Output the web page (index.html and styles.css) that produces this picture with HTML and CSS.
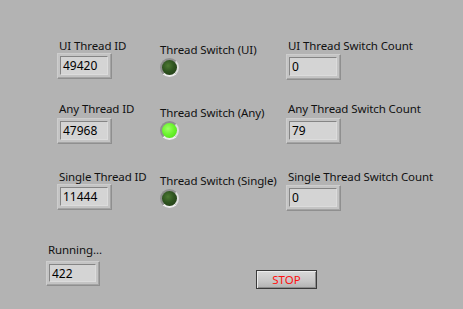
FILE: index.html
```html
<!DOCTYPE html>
<html lang="en">
<head>
    <meta charset="UTF-8">
    <meta name="viewport" content="width=device-width, initial-scale=1.0">
    <title>Thread Switch Panel</title>
    <link rel="stylesheet" href="styles.css">
</head>
<body>
    <div class="panel">
        <div class="grid">
            <div class="cell">
                <div class="label">UI Thread ID</div>
                <div class="indicator"><div class="value">49420</div></div>
            </div>
            <div class="cell led-cell">
                <div class="label">Thread Switch (UI)</div>
                <div class="led"></div>
            </div>
            <div class="cell">
                <div class="label">UI Thread Switch Count</div>
                <div class="indicator count"><div class="value">0</div></div>
            </div>

            <div class="cell">
                <div class="label">Any Thread ID</div>
                <div class="indicator low"><div class="value">47968</div></div>
            </div>
            <div class="cell led-cell">
                <div class="label">Thread Switch (Any)</div>
                <div class="led on"></div>
            </div>
            <div class="cell">
                <div class="label">Any Thread Switch Count</div>
                <div class="indicator count low"><div class="value">79</div></div>
            </div>

            <div class="cell">
                <div class="label">Single Thread ID</div>
                <div class="indicator"><div class="value">11444</div></div>
            </div>
            <div class="cell led-cell">
                <div class="label">Thread Switch (Single)</div>
                <div class="led"></div>
            </div>
            <div class="cell">
                <div class="label">Single Thread Switch Count</div>
                <div class="indicator count"><div class="value">0</div></div>
            </div>
        </div>

        <div class="bottom">
            <div class="running">
                <div class="label">Running...</div>
                <div class="indicator small"><div class="value">422</div></div>
            </div>
            <button class="stop">STOP</button>
        </div>
    </div>
</body>
</html>
```

FILE: styles.css
```css
body {
    margin: 0;
    padding: 0;
    background-color: #b3b3b3;
    font-family: 'Noto Sans', sans-serif;
    font-size: 11.5px;
    letter-spacing: -0.1px;
    color: #111;
    width: 463px;
    height: 309px;
    overflow: hidden;
}

.panel {
    padding-top: 38px;
}

.grid {
    display: grid;
    grid-template-columns: 103px 126px auto;
    grid-template-rows: 63px 68px auto;
    padding-left: 57px;
}

.cell {
    align-self: start;
}

.label {
    line-height: 15px;
    padding-left: 2px;
    white-space: nowrap;
}

.led-cell {
    padding-top: 4px;
}

.led-cell .label {
    padding-left: 0;
}

/* numeric indicator with raised frame and sunken display */
.indicator {
    box-sizing: border-box;
    width: 55px;
    height: 26px;
    background-color: #c4c4c4;
    border: 1px solid;
    border-color: #cdcdcd #8f8f8f #8f8f8f #cdcdcd;
    box-shadow: inset -1px -1px 0 #a4a4a4;
    padding: 2px 3px 3px 2px;
}

.indicator.count {
    margin-top: 1px;
}

.indicator.low {
    margin-top: 2px;
}

.indicator.small {
    width: 54px;
    height: 25px;
    margin-top: 4px;
}

.value {
    box-sizing: border-box;
    height: 100%;
    background-color: #d4d4d4;
    border-top: 1px solid #858585;
    border-left: 1px solid #858585;
    border-right: 1px solid #dcdcdc;
    border-bottom: 1px solid #dcdcdc;
    padding-left: 2px;
    font-size: 12px;
    letter-spacing: 0;
    line-height: 17px;
    color: #000;
}

.led {
    box-sizing: border-box;
    width: 19px;
    height: 19px;
    margin-top: 1px;
    border-radius: 50%;
    border: 2px solid;
    border-color: #8f8f8f #dedede #ececec #8f8f8f;
    background: radial-gradient(circle at 40% 38%, #4d7a33 0%, #2f5420 45%, #1d3512 100%);
}

.led.on {
    background: radial-gradient(circle at 40% 38%, #9dff66 0%, #6cf52e 45%, #48d414 100%);
}

.bottom {
    display: flex;
    padding-left: 46px;
    margin-top: 31px;
}

.running {
    width: 210px;
}

.stop {
    margin-top: 28px;
    width: 61px;
    height: 19px;
    padding: 0;
    font-family: 'Noto Sans', sans-serif;
    font-size: 11.5px;
    line-height: 15px;
    color: #ff1010;
    background: linear-gradient(#d9d9d9, #c6c6c6 60%, #b2b2b2);
    border: 1px solid #3a3a3a;
    box-shadow: inset 1px 1px 0 #ececec, inset -1px -1px 0 #8c8c8c;
}
```
